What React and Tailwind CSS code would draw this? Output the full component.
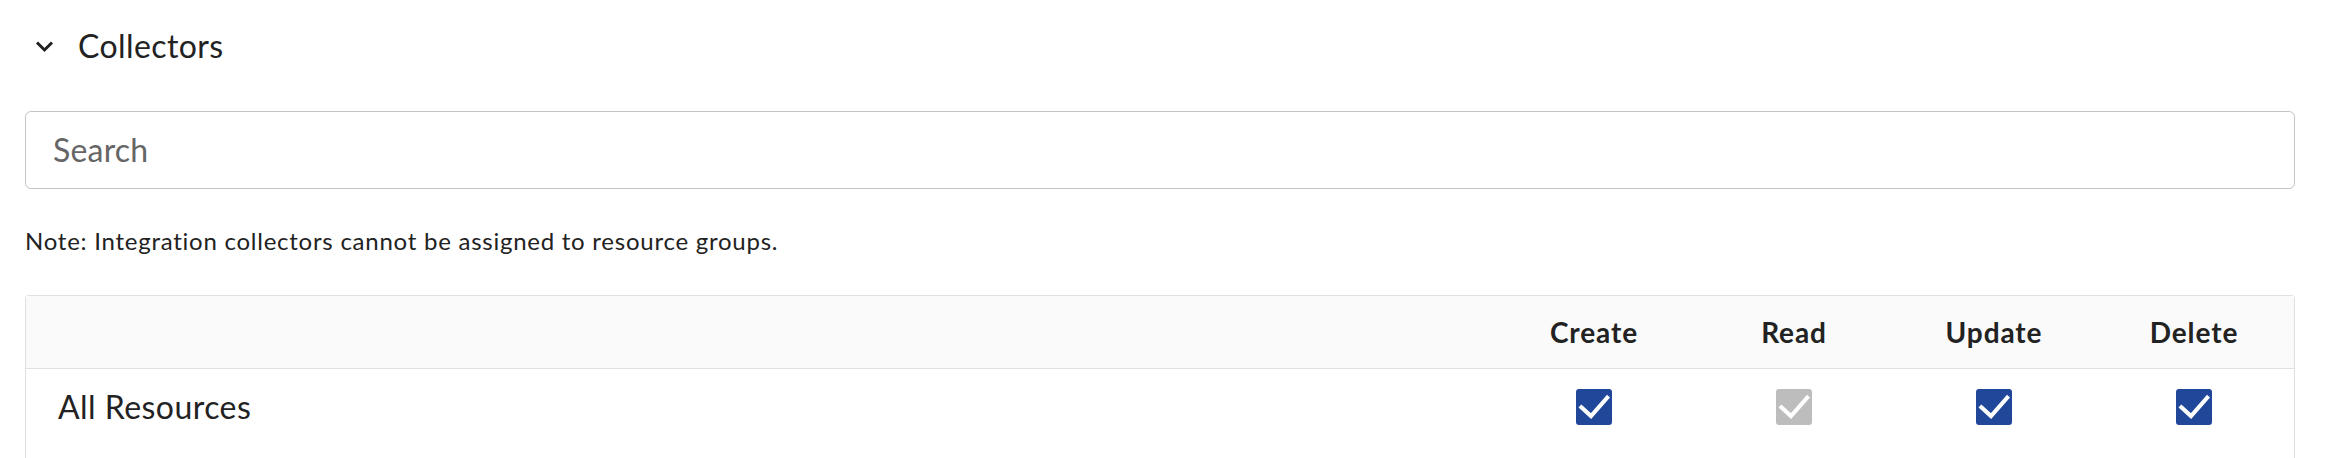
import React from 'react'

const columns = ['Create', 'Read', 'Update', 'Delete']

function Check({ disabled }) {
  return (
    <div
      className={`flex h-[36px] w-[36px] items-center justify-center rounded-[3px] ${disabled ? 'bg-[#bdbdbd]' : 'bg-[#21479b]'}`}
    >
      <svg width="36" height="36" viewBox="0 0 24 24" fill="none">
        <path d="M3.6 12.2 L10 18 L20.8 5.8" stroke="white" strokeWidth="2.7" strokeLinecap="square" />
      </svg>
    </div>
  )
}

export default function App() {
  const perms = { Create: true, Read: 'disabled', Update: true, Delete: true }

  return (
    <div className="min-h-screen bg-white pl-[25px] pr-[31px] text-[#222] font-['Lato','Noto_Sans',sans-serif]">
      {/* Section header */}
      <div className="flex h-[92px] items-center">
        <svg width="19" height="13" viewBox="0 0 19 13" fill="none" className="ml-[10px]">
          <path d="M2 2.5 L9.5 10 L17 2.5" stroke="#222" strokeWidth="3" />
        </svg>
        <span className="ml-[24px] text-[32px] leading-[40px] tracking-[0.4px]">Collectors</span>
      </div>

      {/* Search */}
      <div className="mt-[19px] flex h-[78px] items-center rounded-[6px] border-[1.5px] border-[#c4c4c4] pl-[27px]">
        <input
          placeholder="Search"
          className="w-full bg-transparent text-[32px] leading-[40px] tracking-[0.2px] text-[#222] outline-none placeholder:text-[#666]"
        />
      </div>

      <p className="mt-[37px] text-[24px] leading-[29px] tracking-[0.75px] text-[#222]">
        Note: Integration collectors cannot be assigned to resource groups.
      </p>

      {/* Permissions table */}
      <div className="mt-[40px] rounded-t-[4px] border-x-[1.5px] border-t-[1.5px] border-[#e0e0e0]">
        <div className="flex h-[73px] items-center border-b-[1.5px] border-[#e0e0e0] bg-[#fafafa]">
          <div className="flex-1" />
          {columns.map(c => (
            <div key={c} className="w-[200px] text-center text-[28px] font-bold leading-[34px] tracking-[0.9px]">{c}</div>
          ))}
        </div>
        <div className="flex h-[76px] items-center">
          <div className="flex-1 pl-[32px] text-[32px] leading-[40px] tracking-[0.45px]">All Resources</div>
          {columns.map(c => (
            <div key={c} className="flex w-[200px] justify-center">
              <Check disabled={perms[c] === 'disabled'} />
            </div>
          ))}
        </div>
        <div className="h-[60px]" />
      </div>
    </div>
  )
}
